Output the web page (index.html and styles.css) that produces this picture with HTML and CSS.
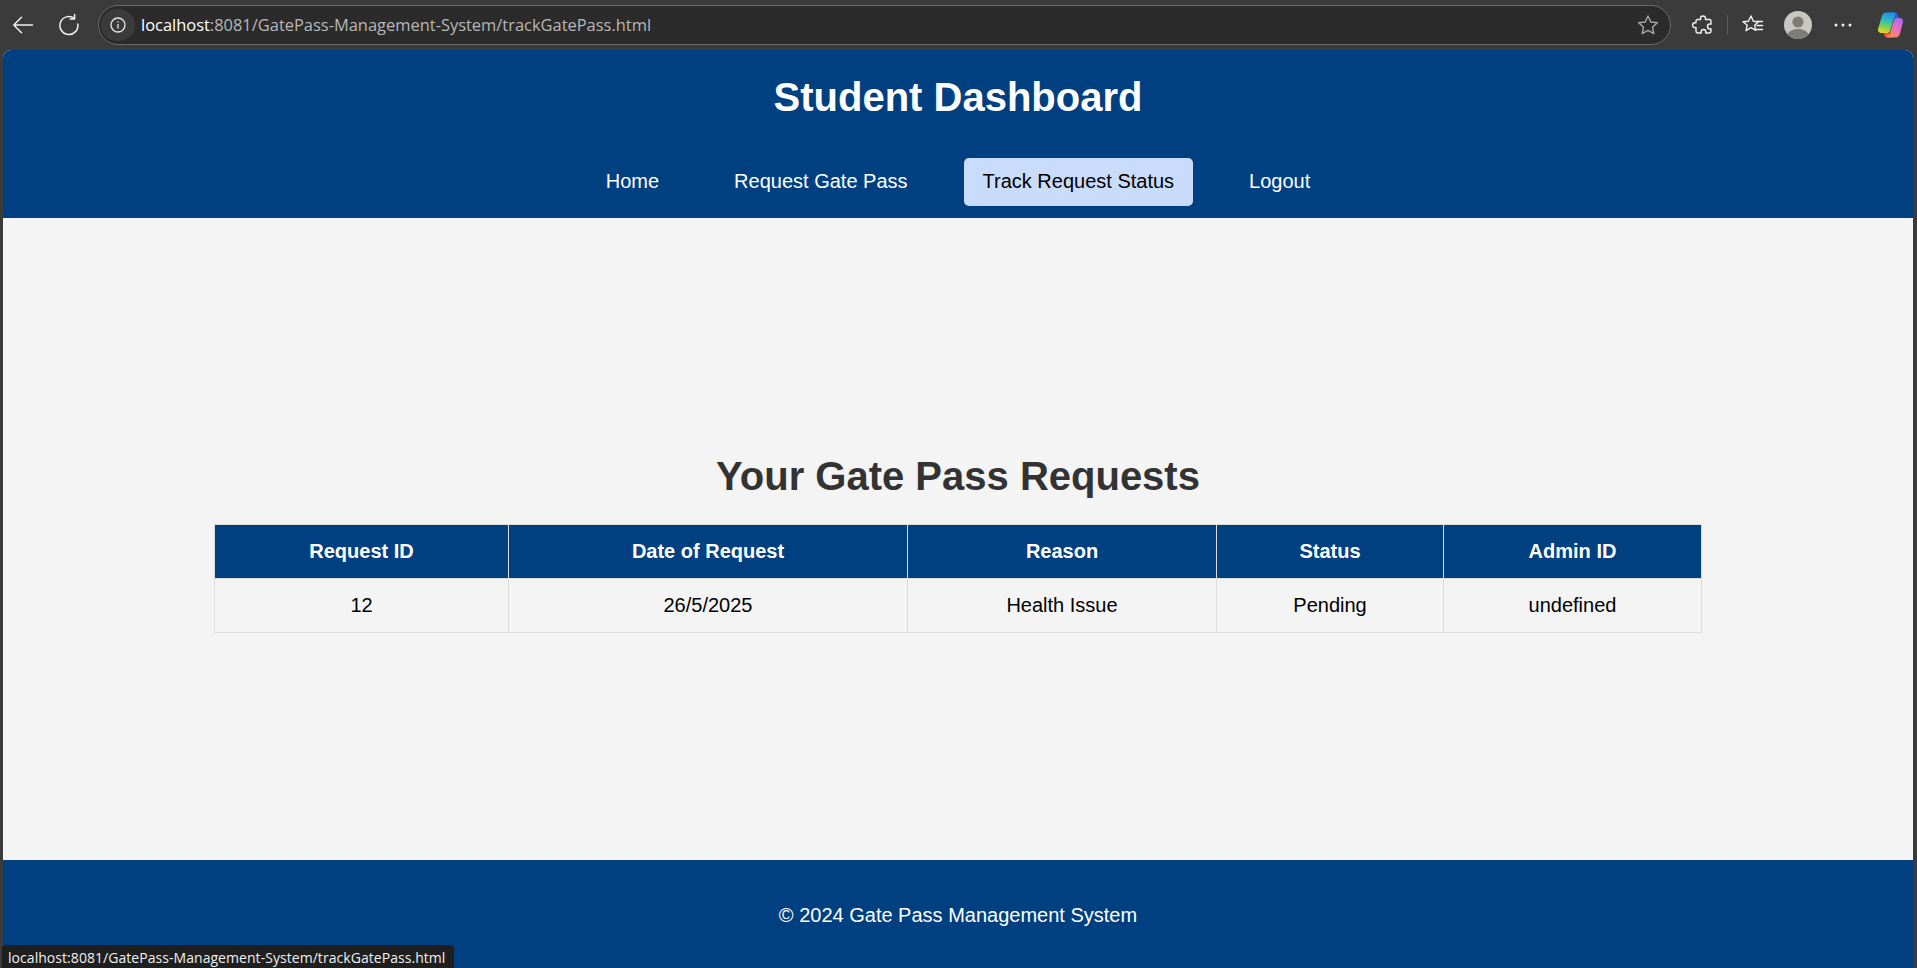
FILE: index.html
```html
<!DOCTYPE html>
<html lang="en">
<head>
  <meta charset="UTF-8" />
  <title>Track Gate Pass</title>
  <link rel="stylesheet" href="styles.css">
</head>
<body>
  <!-- Browser toolbar -->
  <div class="browser-bar">
    <svg class="nav-icon" width="24" height="24" viewBox="0 0 24 24" fill="none" stroke="#f0f0f0" stroke-width="1.5" stroke-linecap="round" stroke-linejoin="round">
      <path d="M21.5 12H2.8M10.5 4.2L2.8 12l7.700 7.800"></path>
    </svg>
    <svg class="nav-icon" width="24" height="24" viewBox="0 0 24 24" fill="none" stroke="#f0f0f0" stroke-width="1.5" stroke-linecap="round" stroke-linejoin="round">
      <path d="M17.2 5.200A9 9 0 1 0 20.800 11"></path>
      <path d="M17.600 1.500v4.400h-4.400"></path>
    </svg>
    <div class="address-bar">
      <span class="site-info">
        <svg width="18" height="18" viewBox="0 0 18 18" fill="none" stroke="#e8e8e8" stroke-width="1.3">
          <circle cx="9" cy="9" r="7"></circle>
          <path d="M9 8v4.600M9 5.200v1.200"></path>
        </svg>
      </span>
      <span class="url"><span class="url-host">localhost</span>:8081/GatePass-Management-System/trackGatePass.html</span>
      <svg class="star-icon" width="24" height="24" viewBox="0 0 24 24" fill="none" stroke="#a8a8a8" stroke-width="1.4" stroke-linejoin="round">
        <path d="M12 3l2.800 6 6.500.8-4.800 4.400 1.300 6.500L12 17.400l-5.800 3.300 1.300-6.500-4.800-4.400 6.500-.8z"></path>
      </svg>
    </div>
    <div class="browser-actions">
      <svg width="24" height="24" viewBox="0 0 24 24" fill="none" stroke="#f0f0f0" stroke-width="1.4" stroke-linejoin="round">
        <path d="M9.500 5.500C9.500 3.800 10.600 3 12 3s2.500.9 2.500 2.500c0 .5 0 .8-.1 1h4.100c.8 0 1.500.7 1.500 1.500v3.200c-.4-.1-.7-.2-1.200-.2-1.400 0-2.300 1-2.300 2.500s.9 2.500 2.300 2.500c.4 0 .8 0 1.200-.2V18c0 1.100-.9 2-2 2h-3.300c.1-.4.2-.7.2-1.100 0-1.400-1-2.400-2.400-2.400s-2.400 1-2.400 2.400c0 .4.1.7.2 1.100H7c-1.100 0-2-.9-2-2v-3.500c-.3.1-.6.1-1 .1-1.400 0-2.400-1-2.400-2.400s1-2.400 2.400-2.400c.4 0 .7 0 1 .1V8c0-.8.7-1.500 1.500-1.500h3.100c-.1-.3-.1-.6-.1-1z"></path>
      </svg>
      <span class="divider"></span>
      <svg width="24" height="24" viewBox="0 0 24 24" fill="none" stroke="#f0f0f0" stroke-width="1.4" stroke-linejoin="round" stroke-linecap="round">
        <path d="M10 3l2.300 5.300 5.200.5-3.800 3.500 1 5-4.700-2.700-5 3.100 1.300-5.500L2 8.800l5.400-.5z"></path>
        <path d="M16.500 8.500h5M16 12.500h5.500M15.500 16.500h6"></path>
      </svg>
      <svg class="avatar" width="28" height="28" viewBox="0 0 28 28">
        <circle cx="14" cy="14" r="14" fill="#c8c7c2"></circle>
        <circle cx="14" cy="11" r="5.600" fill="#7d7c79"></circle>
        <path d="M3.500 23.200C5.500 19.500 9.500 18 14 18s8.500 1.500 10.500 5.200A14 14 0 0 1 3.500 23.200z" fill="#7d7c79"></path>
      </svg>
      <svg width="24" height="24" viewBox="0 0 24 24" fill="#f0f0f0">
        <circle cx="5" cy="12" r="1.500"></circle>
        <circle cx="12" cy="12" r="1.500"></circle>
        <circle cx="19" cy="12" r="1.500"></circle>
      </svg>
      <svg class="copilot" width="28" height="28" viewBox="0 0 28 28">
        <defs>
          <linearGradient id="copilot-left" x1="0.5" y1="0" x2="0.3" y2="1">
            <stop offset="0" stop-color="#1f8fe8"></stop>
            <stop offset="0.4" stop-color="#2fc0b0"></stop>
            <stop offset="0.75" stop-color="#8fd340"></stop>
            <stop offset="1" stop-color="#f4d22c"></stop>
          </linearGradient>
          <linearGradient id="copilot-right" x1="0.7" y1="0" x2="0.3" y2="1">
            <stop offset="0" stop-color="#a56be8"></stop>
            <stop offset="0.5" stop-color="#e86ec4"></stop>
            <stop offset="1" stop-color="#fb8a4c"></stop>
          </linearGradient>
        </defs>
        <path d="M12 1.500h7c2 0 2.800 1.500 3.200 3l.6 3h-5.300z" fill="#2560d8"></path>
        <path d="M6.500 20h6l2 6.500h-3c-1.500 0-2.500-.5-3-2z" fill="#f0503c"></path>
        <path d="M10 1.500h8c1 0 1.500.8 1.200 1.800L14 20c-.5 1.500-1.700 2-3 2H6C3 22 1.500 20 2 18L6 5c.6-2.200 2-3.500 4-3.500z" fill="url(#copilot-left)"></path>
        <path d="M20.500 7h3.500c2.200 0 3.500 1.800 3 4l-3 11.500c-.6 2.500-2.300 4-4.500 4h-8c-.8 0-1-.5-.8-1.200l.8-1.300h.5c1 0 1.500-.5 1.800-1.500L18 9c.4-1.200 1.500-2 2.500-2z" fill="url(#copilot-right)"></path>
      </svg>
    </div>
  </div>

  <div class="page">
    <header class="site-header">
      <h1>Student Dashboard</h1>
      <nav class="main-nav">
        <a href="#">Home</a>
        <a href="#">Request Gate Pass</a>
        <a href="#" class="active">Track Request Status</a>
        <a href="#">Logout</a>
      </nav>
    </header>

    <main class="content">
      <h2>Your Gate Pass Requests</h2>
      <table class="request-table">
        <colgroup>
          <col class="col-id">
          <col class="col-date">
          <col class="col-reason">
          <col class="col-status">
          <col class="col-admin">
        </colgroup>
        <thead>
          <tr>
            <th>Request ID</th>
            <th>Date of Request</th>
            <th>Reason</th>
            <th>Status</th>
            <th>Admin ID</th>
          </tr>
        </thead>
        <tbody>
          <tr>
            <td>12</td>
            <td>26/5/2025</td>
            <td>Health Issue</td>
            <td>Pending</td>
            <td>undefined</td>
          </tr>
        </tbody>
      </table>
    </main>

    <footer class="site-footer">
      <p>&copy; 2024 Gate Pass Management System</p>
    </footer>
  </div>

  <div class="status-bubble">localhost:8081/GatePass-Management-System/trackGatePass.html</div>
</body>
</html>
```

FILE: styles.css
```css
* {
  margin: 0;
  padding: 0;
  box-sizing: border-box;
}

body {
  font-family: "Liberation Sans", Arial, sans-serif;
  height: 968px;
  background: #3b3b3b;
  overflow: hidden;
  display: flex;
  flex-direction: column;
  position: relative;
}

/* Browser toolbar */
.browser-bar {
  height: 50px;
  flex-shrink: 0;
  display: flex;
  align-items: center;
  padding: 0 13px 1px 11px;
  font-family: "Open Sans", "Noto Sans", sans-serif;
}

.nav-icon {
  margin-right: 22px;
}

.address-bar {
  flex: 1;
  height: 40px;
  margin-left: -5px;
  display: flex;
  align-items: center;
  background: #2b2b2b;
  border: 1px solid #6a6a6a;
  border-radius: 20px;
  padding: 0 10px 0 2px;
}

.site-info {
  width: 34px;
  height: 32px;
  display: flex;
  align-items: center;
  justify-content: center;
  background: #3b3b3b;
  border-radius: 16px;
}

.url {
  flex: 1;
  margin-left: 6px;
  font-size: 16.450px;
  color: #b8b8b8;
}

.url-host {
  color: #ffffff;
}

.browser-actions {
  display: flex;
  align-items: center;
  margin-left: 20px;
}

.divider {
  width: 1px;
  height: 20px;
  background: #5c5c5c;
  margin: 0 13px 0 12px;
}

.avatar {
  margin: 0 19px 0 19px;
}

.copilot {
  margin-left: 21px;
}

/* Page */
.page {
  flex: 1;
  margin: 0 4px 0 3px;
  display: flex;
  flex-direction: column;
  border-radius: 8px 8px 0 0;
  overflow: hidden;
  background: #f4f4f4;
}

.site-header {
  background: #004080;
  color: white;
  text-align: center;
  height: 168px;
  padding-top: 24px;
}

.site-header h1 {
  font-size: 40px;
  line-height: 46px;
}

.main-nav {
  display: flex;
  justify-content: center;
  margin-top: 38px;
}

.main-nav a {
  color: white;
  text-decoration: none;
  font-size: 20px;
  line-height: 24px;
  padding: 11px 19px 13px;
  margin: 0 18.500px;
  border-radius: 5px;
}

.main-nav a.active {
  background: #c9dcfb;
  color: black;
}

.content {
  flex: 1;
  display: flex;
  flex-direction: column;
  align-items: center;
  padding-top: 235px;
}

.content h2 {
  font-size: 40px;
  line-height: 46px;
  color: #333333;
  margin-bottom: 25px;
}

.request-table {
  width: 1487px;
  table-layout: fixed;
  border-collapse: collapse;
  font-size: 20px;
}

.col-id { width: 294px; }
.col-date { width: 399px; }
.col-reason { width: 309px; }
.col-status { width: 227px; }
.col-admin { width: 258px; }

.request-table th,
.request-table td {
  border: 1px solid #dddddd;
  text-align: center;
  vertical-align: middle;
}

.request-table th {
  height: 54px;
  background: #004080;
  color: white;
  font-weight: bold;
}

.request-table td {
  height: 54px;
  color: black;
}

.site-footer {
  height: 108px;
  flex-shrink: 0;
  background: #004080;
  color: white;
  text-align: center;
  font-size: 20px;
  padding-top: 44px;
}

/* Link preview in the bottom corner */
.status-bubble {
  position: absolute;
  left: 2px;
  bottom: 0;
  height: 23px;
  padding: 0 9px 0 6px;
  background: #1f1f1f;
  border-radius: 3px 4px 0 0;
  color: #f0f0f0;
  font-family: "Open Sans", "Noto Sans", sans-serif;
  font-size: 14px;
  letter-spacing: 0.050px;
  line-height: 26px;
}
```
